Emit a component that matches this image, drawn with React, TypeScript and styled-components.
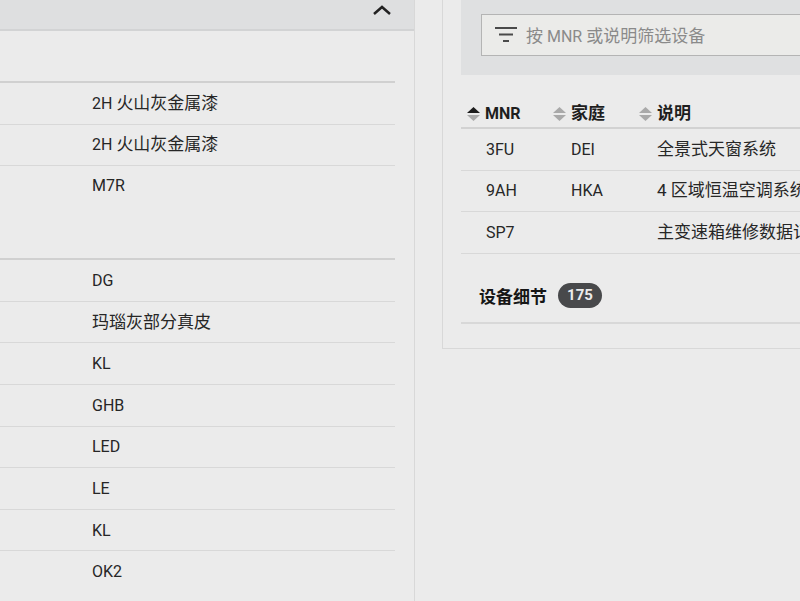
import styled, { createGlobalStyle } from "styled-components";

const GlobalStyle = createGlobalStyle`
  html, body {
    margin: 0;
    height: 100%;
    overflow: hidden;
    background: #ebebeb;
  }
  body {
    font-family: Roboto, "Noto Sans CJK SC", sans-serif;
    font-size: 17px;
    color: #262626;
  }
`;

const Page = styled.div`
  display: flex;
  width: 800px;
  height: 601px;
  overflow: hidden;
`;

const LeftPanel = styled.aside`
  flex: 0 0 415px;
  height: 601px;
  box-sizing: border-box;
  border-right: 1px solid #d8d8d8;
  overflow: hidden;
`;

const AccordionBar = styled.div`
  display: flex;
  align-items: center;
  justify-content: flex-end;
  height: 29px;
  box-sizing: content-box;
  padding-right: 22px;
  background: #dedfe0;
  border-bottom: 2px solid #d2d3d4;
`;

const Chevron = styled.svg`
  margin-bottom: 9px;
`;

const Spec = styled.div`
  width: 395px;
  padding-top: 50px;
`;

const SpecGroup = styled.div`
  border-top: 2px solid #d0d0d0;
`;

const SpecRow = styled.div<{ $tall?: boolean }>`
  box-sizing: border-box;
  height: ${(p) => (p.$tall ? "92px" : "41.6px")};
  padding: ${(p) => (p.$tall ? "8px" : "0")} 0 0 92px;
  display: flex;
  align-items: ${(p) => (p.$tall ? "flex-start" : "center")};
  border-bottom: 1px solid #d8d8d8;
  line-height: 23px;
  white-space: pre;

  &:last-child {
    border-bottom: ${(p) => (p.$tall ? "none" : "1px solid transparent")};
  }
`;

const Latin = styled.span`
  font-size: 16px;
`;

const RightPanel = styled.section`
  flex: 0 0 auto;
  align-self: flex-start;
  width: 400px;
  height: 349px;
  margin-left: 27px;
  box-sizing: border-box;
  padding-left: 18px;
  border-left: 1px solid #d8d8d8;
  border-bottom: 1px solid #d8d8d8;
`;

const FilterArea = styled.div`
  height: 75px;
  box-sizing: border-box;
  padding: 14px 0 0 20px;
  background: #dfe0e1;
`;

const FilterInput = styled.div`
  display: flex;
  align-items: center;
  gap: 9px;
  height: 42px;
  box-sizing: border-box;
  padding: 0 0 1px 13px;
  background: #ebebe9;
  border: 1px solid #b4b4b4;
  border-right: none;
  color: #8a8a8a;
  white-space: pre;
`;

const Table = styled.div`
  padding-top: 25px;
`;

const HeadRow = styled.div`
  display: grid;
  grid-template-columns: 86px 86px 1fr;
  height: 27px;
  align-items: center;
  padding-left: 6px;
  border-bottom: 2px solid #d2d2d2;
  font-weight: 700;
  line-height: 23px;
  color: #1e1e1e;
  white-space: nowrap;
`;

const HeadCell = styled.div`
  display: flex;
  align-items: center;
  gap: 5px;
`;

const BodyRow = styled.div`
  display: grid;
  grid-template-columns: 85px 86px 1fr;
  height: 41.5px;
  box-sizing: border-box;
  align-items: center;
  padding-left: 25px;
  border-bottom: 1px solid #d8d8d8;
  line-height: 23px;
  white-space: pre;
  overflow: hidden;
`;

const DetailsHeading = styled.div`
  display: flex;
  align-items: center;
  gap: 11px;
  height: 70.5px;
  box-sizing: border-box;
  padding: 15px 0 0 18px;
  border-bottom: 2px solid #d8d8d8;
  font-weight: 700;
  color: #161616;
`;

const CountBadge = styled.span`
  display: inline-flex;
  align-items: center;
  justify-content: center;
  width: 44px;
  height: 25px;
  border-radius: 13px;
  background: #48494b;
  color: #ececec;
  font-size: 15px;
`;

function ChevronUp() {
  return (
    <Chevron width="20" height="12" viewBox="0 0 20 12" fill="none">
      <path d="M2 10 L10 3 L18 10" stroke="#222" strokeWidth="2.5" />
    </Chevron>
  );
}

function FilterIcon() {
  return (
    <svg width="22" height="16" viewBox="0 0 22 16" fill="#4a4a4a">
      <rect x="0" y="0" width="22" height="2" />
      <rect x="4" y="6.5" width="14" height="2" />
      <rect x="8" y="13" width="6" height="2" />
    </svg>
  );
}

function SortIcon({ active }: { active?: boolean }) {
  return (
    <svg width="13" height="16" viewBox="0 0 13 16">
      <path d="M6.5 1 L13 7 L0 7 Z" fill={active ? "#1c1c1c" : "#a9a9a9"} />
      <path d="M0 9 L13 9 L6.5 15 Z" fill="#a9a9a9" />
    </svg>
  );
}

const secondGroup = ["DG", "玛瑙灰部分真皮", "KL", "GHB", "LED", "LE", "KL", "OK2"];
const equipment = [
  ["3FU", "DEI", "全景式天窗系统"],
  ["9AH", "HKA", "4 区域恒温空调系统"],
  ["SP7", "", "主变速箱维修数据记录"],
];

export default function App() {
  return (
    <Page>
      <GlobalStyle />
      <LeftPanel>
        <AccordionBar>
          <ChevronUp />
        </AccordionBar>
        <Spec>
          <SpecGroup>
            <SpecRow>
              <Latin>2H </Latin>火山灰金属漆
            </SpecRow>
            <SpecRow>
              <Latin>2H </Latin>火山灰金属漆
            </SpecRow>
            <SpecRow $tall>
              <Latin>M7R</Latin>
            </SpecRow>
          </SpecGroup>
          <SpecGroup>
            {secondGroup.map((value, i) => (
              <SpecRow key={i}>
                {/^[A-Z0-9]+$/.test(value) ? <Latin>{value}</Latin> : value}
              </SpecRow>
            ))}
          </SpecGroup>
        </Spec>
      </LeftPanel>
      <RightPanel>
        <FilterArea>
          <FilterInput>
            <FilterIcon />
            <span>
              按<Latin> MNR </Latin>或说明筛选设备
            </span>
          </FilterInput>
        </FilterArea>
        <Table>
          <HeadRow>
            <HeadCell>
              <SortIcon active />
              <Latin>MNR</Latin>
            </HeadCell>
            <HeadCell>
              <SortIcon />
              家庭
            </HeadCell>
            <HeadCell>
              <SortIcon />
              说明
            </HeadCell>
          </HeadRow>
          {equipment.map((row) => (
            <BodyRow key={row[0]}>
              <Latin>{row[0]}</Latin>
              <Latin>{row[1]}</Latin>
              <span>{row[2]}</span>
            </BodyRow>
          ))}
        </Table>
        <DetailsHeading>
          设备细节
          <CountBadge>175</CountBadge>
        </DetailsHeading>
      </RightPanel>
    </Page>
  );
}
